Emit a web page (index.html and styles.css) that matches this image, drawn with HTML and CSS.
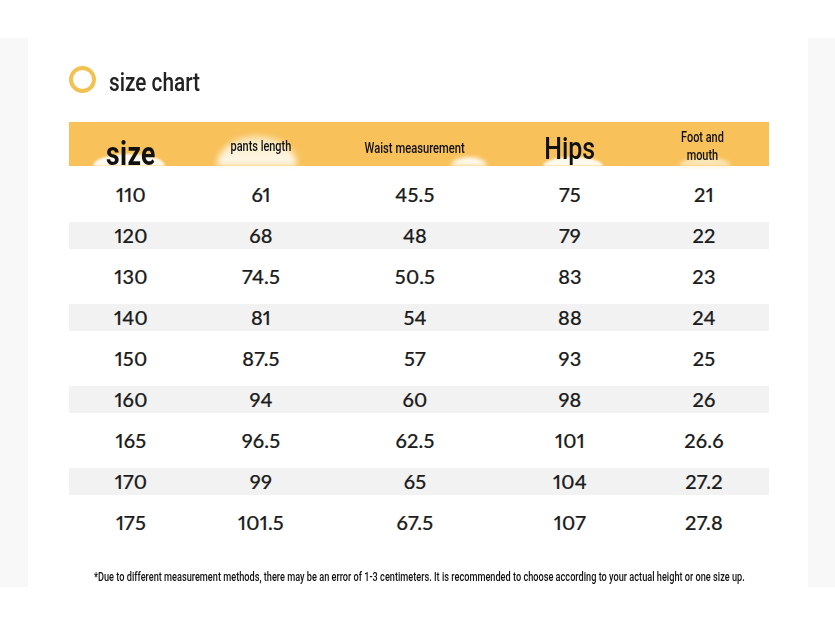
FILE: index.html
```html
<!DOCTYPE html>
<html>
<head>
<meta charset="utf-8">
<link rel="stylesheet" href="styles.css">
</head>
<body>
<div class="band">
  <div class="panel">
    <div class="title">
      <span class="ring"></span>
      <span class="title-text cond">size chart</span>
    </div>
    <div class="head">
      <div class="hc hc-size"><span class="cond big">size</span></div>
      <div class="hc hc-len"><span class="cond small">pants length</span></div>
      <div class="hc hc-waist"><span class="cond small">Waist measurement</span></div>
      <div class="hc hc-hips"><span class="cond big2">Hips</span></div>
      <div class="hc hc-foot"><span class="cond small two">Foot and<br>mouth</span></div>
    </div>
    <div class="rows">
      <div class="row"><span>110</span><span>61</span><span>45.5</span><span>75</span><span>21</span></div>
      <div class="row alt"><span>120</span><span>68</span><span>48</span><span>79</span><span>22</span></div>
      <div class="row"><span>130</span><span>74.5</span><span>50.5</span><span>83</span><span>23</span></div>
      <div class="row alt"><span>140</span><span>81</span><span>54</span><span>88</span><span>24</span></div>
      <div class="row"><span>150</span><span>87.5</span><span>57</span><span>93</span><span>25</span></div>
      <div class="row alt"><span>160</span><span>94</span><span>60</span><span>98</span><span>26</span></div>
      <div class="row"><span>165</span><span>96.5</span><span>62.5</span><span>101</span><span>26.6</span></div>
      <div class="row alt"><span>170</span><span>99</span><span>65</span><span>104</span><span>27.2</span></div>
      <div class="row"><span>175</span><span>101.5</span><span>67.5</span><span>107</span><span>27.8</span></div>
    </div>
    <div class="note"><span class="cond note-text">*Due to different measurement methods, there may be an error of 1-3 centimeters. It is recommended to choose according to your actual height or one size up.</span></div>
  </div>
</div>
</body>
</html>
```

FILE: styles.css
```css
html, body {
  margin: 0;
  padding: 0;
  background: #ffffff;
}
body {
  font-family: Roboto, "Liberation Sans", sans-serif;
  color: #1d1d1d;
}
.band {
  margin-top: 38px;
  height: 549px;
  background: #f8f8f8;
  padding: 0 27px 0 28px;
}
.panel {
  background: #ffffff;
  height: 100%;
  padding: 28px 39px 0 41px;
  box-sizing: border-box;
}
.cond {
  display: inline-block;
  transform: scaleX(0.78);
  white-space: nowrap;
}
.title {
  display: flex;
  align-items: center;
  height: 27px;
}
.ring {
  width: 19px;
  height: 19px;
  border: 4px solid #f1c252;
  border-radius: 50%;
  flex: none;
}
.title-text {
  font-size: 26px;
  font-weight: 500;
  color: #222;
  transform: scaleX(0.8);
  transform-origin: left center;
  margin-left: 13px;
  position: relative;
  top: 2px;
}
.head {
  margin-top: 29px;
  height: 44px;
  background: #f8c15a;
  display: grid;
  grid-template-columns: 124px 136px 172px 138px 130px;
}
.hc {
  position: relative;
  display: flex;
  align-items: center;
  justify-content: center;
  color: #111;
}
.hc > span {
  position: relative;
  z-index: 1;
  text-align: center;
}
.hc::after {
  content: "";
  position: absolute;
  bottom: 0;
  background: #fffaf0;
  border-radius: 50% 50% 0 0 / 100% 100% 0 0;
}
.hc-size::after { left: 24px; width: 72px; height: 12px; filter: blur(1px); }
.hc-len::after { left: 24px; width: 80px; height: 30px; background: linear-gradient(#fbe6b8, #fffbf2); filter: blur(3px); }
.hc-waist::after { left: 122px; width: 36px; height: 9px; filter: blur(2px); }
.hc-hips::after { left: 42px; width: 60px; height: 9px; filter: blur(1px); }
.hc-foot::after { left: 40px; width: 52px; height: 8px; filter: blur(2px); background: #fdeac2; }
.big {
  font-size: 34px;
  font-weight: 700;
  top: 9px;
  letter-spacing: 0.5px;
}
.big2 {
  font-size: 32px;
  font-weight: 500;
  top: 4px;
}
.small {
  font-size: 14px;
  font-weight: 500;
}
.hc-len .small { top: 2px; }
.hc-waist .small { top: 4px; transform: scaleX(0.8); }
.two {
  line-height: 18px;
  top: 2px;
  left: -2px;
}
.rows {
  margin-top: 15px;
  display: flex;
  flex-direction: column;
  gap: 14px;
}
.row {
  height: 27px;
  display: grid;
  grid-template-columns: 124px 136px 172px 138px 130px;
  align-items: center;
  font-family: Lato, "Open Sans", sans-serif;
  font-size: 20px;
  font-weight: 500;
  font-variant-numeric: proportional-nums;
  -webkit-text-stroke: 0.2px #1c1c1c;
  color: #1c1c1c;
}
.row span {
  text-align: center;
  letter-spacing: 0.2px;
  position: relative;
  top: -1px;
}
.row.alt {
  background: #f2f2f2;
}
.note {
  margin-top: 34px;
  display: flex;
  justify-content: center;
  height: 16px;
}
.note-text {
  font-size: 12px;
  font-weight: 500;
  color: #111;
  transform: scaleX(0.765);
  flex: none;
}
```
